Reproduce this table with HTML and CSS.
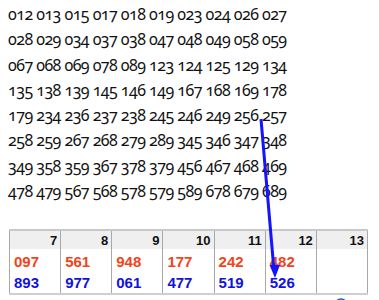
FILE: index.html
```html
<!DOCTYPE html>
<html>
<head>
<meta charset="utf-8">
<link rel="stylesheet" href="styles.css">
</head>
<body>
<div class="nums">
<div class="line">012 013 015 017 018 019 023 024 026 027</div>
<div class="line">028 029 034 037 038 047 048 049 058 059</div>
<div class="line">067 068 069 078 089 123 124 125 129 134</div>
<div class="line">135 138 139 145 146 149 167 168 169 178</div>
<div class="line">179 234 236 237 238 245 246 249 256 257</div>
<div class="line">258 259 267 268 279 289 345 346 347 348</div>
<div class="line">349 358 359 367 378 379 456 467 468 469</div>
<div class="line">478 479 567 568 578 579 589 678 679 689</div>
</div>
<table class="grid">
<tr class="head"><td>7</td><td>8</td><td>9</td><td>10</td><td>11</td><td>12</td><td>13</td></tr>
<tr class="red"><td>097</td><td>561</td><td>948</td><td>177</td><td>242</td><td>482</td><td></td></tr>
<tr class="blue"><td>893</td><td>977</td><td>061</td><td>477</td><td>519</td><td>526</td><td></td></tr>
</table>
<svg class="overlay" width="379" height="300" viewBox="0 0 379 300">
<line x1="261" y1="119" x2="273.6" y2="266" stroke="#1414ff" stroke-width="3"/>
<polygon points="269.5,265 280,265 275,278" fill="#1414ff"/>
<circle cx="341" cy="305" r="6" fill="none" stroke="#1a64c8" stroke-width="1.6"/>
</svg>
</body>
</html>
```
FILE: styles.css
```css
html, body {
  margin: 0;
  padding: 0;
  background: #fff;
}
body {
  padding: 2px 0 0 8px;
  position: relative;
  width: 379px;
  height: 300px;
  overflow: hidden;
  box-sizing: border-box;
}
.nums {
  font-family: "Noto Sans", sans-serif;
  font-variant-numeric: oldstyle-nums;
  font-size: 16px;
  letter-spacing: -0.55px;
  line-height: 25.3px;
  color: #111;
  white-space: nowrap;
}
.grid {
  border-collapse: collapse;
  margin: 25px 0 0 1px;
  width: 359px;
  font-family: "Liberation Sans", Arial, sans-serif;
  font-weight: bold;
  table-layout: fixed;
}
.grid td {
  padding: 0 3px 0 4px;
  border-left: 1px solid #a8a8a8;
  border-right: 1px solid #a8a8a8;
}
.head td {
  background: #efefef;
  text-align: right;
  font-size: 13px;
  height: 18px;
  color: #111;
  border-top: 2px solid #c8c8c8;
}
.red td {
  color: #f2441a;
  font-size: 15px;
  height: 21px;
  padding-top: 2px;
}
.blue td {
  color: #1212dd;
  font-size: 15px;
  height: 21px;
  border-bottom: 2px solid #cfcfcf;
}
.overlay {
  position: absolute;
  left: 0;
  top: 0;
  pointer-events: none;
}
```
